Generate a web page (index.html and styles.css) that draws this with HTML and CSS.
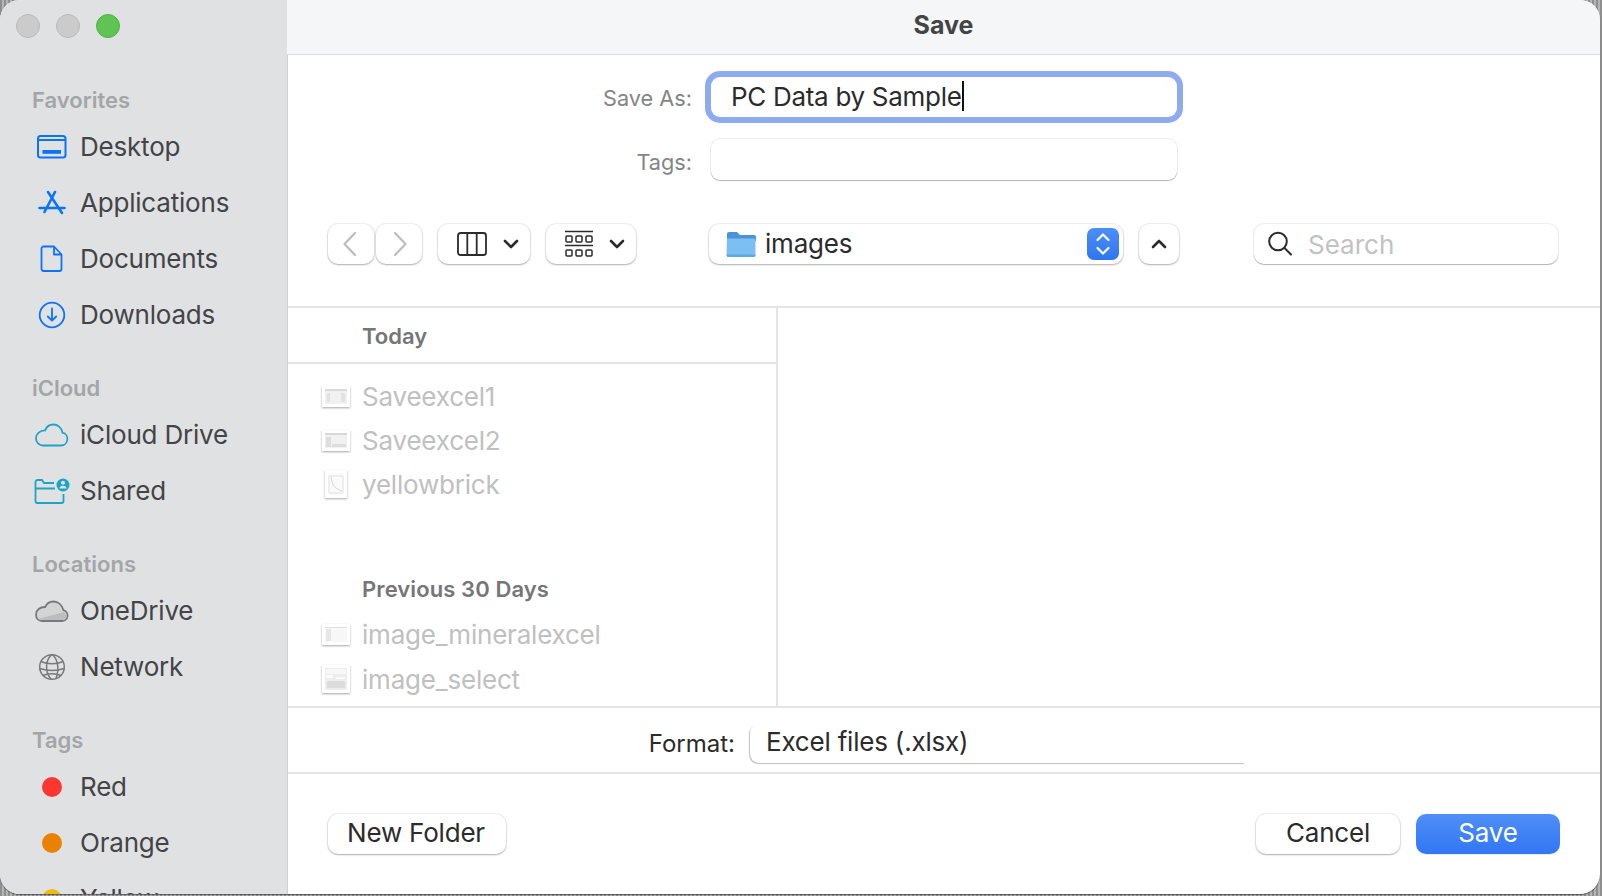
FILE: index.html
```html
<!DOCTYPE html>
<html lang="en">
<head>
<meta charset="utf-8">
<title>Save</title>
<link rel="stylesheet" href="styles.css">
</head>
<body>
<div class="window">
  <aside class="sidebar">
    <div class="lights"><span class="light"></span><span class="light"></span><span class="light green"></span></div>
    <div class="sec-title first">Favorites</div>
    <div class="item"><span class="ico"><svg width="32" height="26" viewBox="0 0 32 26" fill="none" stroke="#0a74f5" stroke-width="2"><rect x="2" y="2" width="27.5" height="21.5" rx="2.5"/><path d="M2 6h27.5"/><rect x="6.5" y="16" width="18.500" height="3.800" fill="#0a74f5" stroke="none"/></svg></span>Desktop</div>
    <div class="item"><span class="ico"><svg width="30" height="28" viewBox="0 0 30 28" fill="none" stroke="#0a74f5" stroke-width="2.600" stroke-linecap="round"><path d="M11 3l14 21M18 3L7.500 23M2.500 19h25"/></svg></span>Applications</div>
    <div class="item"><span class="ico"><svg width="24" height="28" viewBox="0 0 24 28" fill="none" stroke="#0a74f5" stroke-width="1.800" stroke-linejoin="round"><path d="M3.500 1.500H14l7.500 8V24a2 2 0 0 1-2 2h-16a2 2 0 0 1-2-2V3.500a2 2 0 0 1 2-2z"/><path d="M14 1.500V9.500h7.500"/></svg></span>Documents</div>
    <div class="item"><span class="ico"><svg width="28" height="28" viewBox="0 0 28 28" fill="none" stroke="#0a74f5" stroke-width="1.800" stroke-linecap="round" stroke-linejoin="round"><circle cx="14" cy="14" r="12.300"/><path d="M14 7.500v12M9.800 15.500l4.200 4.200 4.200-4.200"/></svg></span>Downloads</div>

    <div class="sec-title">iCloud</div>
    <div class="item"><span class="ico"><svg width="34" height="24" viewBox="0 0 34 24" fill="none" stroke="#1ea5c4" stroke-width="1.800"><path d="M8 22.500h18a6.500 6.500 0 0 0 1.500-12.800C26.500 4.500 22.500 1.500 18.500 1.500c-4 0-7 2.300-8.300 5.800C5 7 1 11 1 15.200c0 4 3 7.300 7 7.300z"/></svg></span>iCloud Drive</div>
    <div class="item"><span class="ico"><svg width="36" height="26" viewBox="0 0 36 26" fill="none" stroke="#1ea5c4" stroke-width="1.800"><path d="M20 5H10L8 2H3.500A2 2 0 0 0 1.500 4v19a2 2 0 0 0 2 2h24a2 2 0 0 0 2-2v-7M1.500 10.500H21"/><circle cx="29" cy="7" r="6.500" fill="#1ea5c4" stroke="none"/><circle cx="29" cy="4.800" r="2" fill="#e0e1e3" stroke="none"/><path d="M25.500 10.500a3.500 2.800 0 0 1 7 0z" fill="#e0e1e3" stroke="none"/></svg></span>Shared</div>

    <div class="sec-title">Locations</div>
    <div class="item"><span class="ico"><svg width="34" height="22" viewBox="0 0 34 22" fill="none"><path d="M7 21h20a5.500 5.500 0 0 0 1.500-10.800C27 5 23 1.500 18.500 1.500c-4 0-7 2.300-8.300 5.500C5 6.800 1 10 1 14.500 1 18.500 3.500 21 7 21z" fill="#d3d4d6" stroke="#77797c" stroke-width="1.800"/><path d="M3 19l26-7 3 5-4 3H7z" fill="#bcbdc0"/></svg></span>OneDrive</div>
    <div class="item"><span class="ico"><svg width="28" height="28" viewBox="0 0 28 28" fill="none" stroke="#77797c" stroke-width="1.500"><circle cx="14" cy="14" r="12.300"/><path d="M14 1.700c-6 4-8 16-1 24.600M14 1.700c5 3 8 13 4 24M3 8.500c6 3 16 3 22 0M1.800 15.500c7 2.500 17 2.500 24.400 0M5 22.500c5-2.500 13-2 18 0"/></svg></span>Network</div>

    <div class="sec-title">Tags</div>
    <div class="item"><span class="ico"><span class="tag red"></span></span>Red</div>
    <div class="item"><span class="ico"><span class="tag orange"></span></span>Orange</div>
    <div class="item"><span class="ico"><span class="tag yellow"></span></span>Yellow</div>
  </aside>

  <main class="main">
    <header class="titlebar">Save</header>

    <div class="form-row save-row">
      <label class="form-label">Save As:</label>
      <div class="field focus"><span>PC Data by Sample</span><i class="caret"></i></div>
    </div>
    <div class="form-row tags-row">
      <label class="form-label">Tags:</label>
      <div class="field tall"></div>
    </div>

    <div class="toolbar">
      <button class="btn nav back"><svg width="16" height="26" viewBox="0 0 16 26" fill="none" stroke="#bdbdbd" stroke-width="2.200" stroke-linecap="round" stroke-linejoin="round"><path d="M13 2L2.500 13 13 24"/></svg></button>
      <button class="btn nav second"><svg width="16" height="26" viewBox="0 0 16 26" fill="none" stroke="#bdbdbd" stroke-width="2.200" stroke-linecap="round" stroke-linejoin="round"><path d="M3 2l10.500 11L3 24"/></svg></button>
      <button class="btn view"><svg width="30" height="24" viewBox="0 0 30 24" fill="none" stroke="#2b2b2b" stroke-width="1.800"><rect x="1" y="1" width="28" height="22" rx="2.500"/><path d="M10.300 1v22M19.700 1v22"/></svg><svg class="chev" width="16" height="10" viewBox="0 0 16 10" fill="none" stroke="#2b2b2b" stroke-width="2.600" stroke-linecap="round" stroke-linejoin="round"><path d="M2 2l6 6 6-6"/></svg></button>
      <button class="btn group"><svg width="28" height="28" viewBox="0 0 28 28" fill="none" stroke="#2b2b2b" stroke-width="1.500"><path d="M0 1.500h28M0 15.500h28"/><rect x="1" y="6" width="6" height="6" rx="1"/><rect x="11" y="6" width="6" height="6" rx="1"/><rect x="21" y="6" width="6" height="6" rx="1"/><rect x="1" y="20" width="6" height="6" rx="1"/><rect x="11" y="20" width="6" height="6" rx="1"/><rect x="21" y="20" width="6" height="6" rx="1"/></svg><svg class="chev" width="16" height="10" viewBox="0 0 16 10" fill="none" stroke="#2b2b2b" stroke-width="2.600" stroke-linecap="round" stroke-linejoin="round"><path d="M2 2l6 6 6-6"/></svg></button>
      <div class="btn popup">
        <svg class="folder" width="30" height="28" viewBox="0 0 30 28"><path d="M1 4a2 2 0 0 1 2-2h8l3 3h14a2 2 0 0 1 2 2v4H1z" fill="#4a93d8"/><path d="M1 8.500h27a1.500 1.500 0 0 1 1.500 1.500V25a2 2 0 0 1-2 2h-25a2 2 0 0 1-2-2z" fill="#7cc0f3"/><path d="M1 24.500h28.500V25a2 2 0 0 1-2 2h-25a2 2 0 0 1-2-2z" fill="#62a6de"/></svg>
        <span class="popup-text">images</span>
        <span class="stepper"><svg width="16" height="24" viewBox="0 0 16 24" fill="none" stroke="#fff" stroke-width="2.200" stroke-linecap="round" stroke-linejoin="round"><path d="M2.500 8L8 2.500 13.500 8M2.500 16L8 21.500 13.500 16"/></svg></span>
      </div>
      <button class="btn up"><svg width="16" height="10" viewBox="0 0 16 10" fill="none" stroke="#2b2b2b" stroke-width="2.600" stroke-linecap="round" stroke-linejoin="round"><path d="M2 8l6-6 6 6"/></svg></button>
      <div class="btn search"><svg width="26" height="26" viewBox="0 0 26 26" fill="none" stroke="#2b2b2b" stroke-width="2" stroke-linecap="round"><circle cx="11" cy="10.500" r="8.800"/><path d="M17.500 17l6.500 6.500"/></svg><span class="placeholder">Search</span></div>
    </div>

    <section class="browser">
      <div class="col-list">
        <div class="list-head">Today</div>
        <div class="file first-file"><span class="thumb wide"><svg width="22" height="15" viewBox="0 0 22 15"><rect width="22" height="15" fill="#f1f1f1"/><rect width="22" height="2" fill="#d9d9d9"/><path d="M2 4h3v9H2zM16 4h4v9h-4z" fill="#e2e2e2"/></svg></span>Saveexcel1</div>
        <div class="file"><span class="thumb wide"><svg width="22" height="15" viewBox="0 0 22 15"><rect width="22" height="15" fill="#f1f1f1"/><rect width="22" height="2" fill="#d9d9d9"/><path d="M1 4h5v10H1zM7 11h14v3H7z" fill="#dedede"/></svg></span>Saveexcel2</div>
        <div class="file"><span class="thumb tall-thumb"><svg width="16" height="22" viewBox="0 0 16 22" fill="none"><rect width="16" height="22" fill="#fafafa"/><path d="M1 3h14v17H1z" stroke="#e2e2e2"/><path d="M3 4c1 8 4 12 11 14" stroke="#cfd8de"/></svg></span>yellowbrick</div>
        <div class="list-head plain">Previous 30 Days</div>
        <div class="file"><span class="thumb wide"><svg width="22" height="15" viewBox="0 0 22 15"><rect width="22" height="15" fill="#f7f7f7"/><rect width="22" height="1" fill="#e0e0e0"/><path d="M1 2h5v12H1z" fill="#e6e6e6"/></svg></span>image_mineralexcel</div>
        <div class="file last-file"><span class="thumb square"><svg width="22" height="22" viewBox="0 0 22 22"><rect width="22" height="22" fill="#ededed"/><path d="M1 1h20v5H1z" fill="#f8f8f8"/><path d="M1 7h7v3H1zM11 9h9v2h-9z" fill="#fbfbfb"/><path d="M2 13h18v7H2z" fill="#dcdcdc"/></svg></span>image_select</div>
      </div>
      <div class="col-empty"></div>
    </section>

    <div class="format-row">
      <label class="format-label">Format:</label>
      <div class="format-field">Excel files (.xlsx)</div>
    </div>

    <footer class="footer">
      <button class="btn action new-folder">New Folder</button>
      <div class="footer-right">
        <button class="btn action cancel">Cancel</button>
        <button class="btn action primary">Save</button>
      </div>
    </footer>
  </main>
</div>
</body>
</html>
```
FILE: styles.css
```css
* { box-sizing: border-box; }
html, body { margin: 0; padding: 0; height: 100%; }
body {
  width: 1602px;
  height: 896px;
  overflow: hidden;
  background: repeating-linear-gradient(90deg, #8f8f8f 0 2px, #b5b5b5 2px 4px);
  font-family: "Inter", "Liberation Sans", sans-serif;
  color: #2b2b2b;
}
.window {
  display: flex;
  width: 1600px;
  height: 894px;
  border-radius: 20px;
  overflow: hidden;
  background: #fff;
  box-shadow: 0 1px 1px rgba(0,0,0,.45);
}
.sidebar {
  flex: 0 0 288px;
  height: 100%;
  overflow: hidden;
  background: #e0e1e3;
  border-right: 1px solid #cfd0d2;
}
.lights { display: flex; gap: 16px; padding: 14px 0 0 16px; height: 86px; }
.light {
  width: 24px; height: 24px; border-radius: 50%;
  background: #cbcbcc; border: 1px solid #b9b9ba;
}
.light.green { background: #5fc454; border-color: #52b148; }
.sec-title {
  height: 28px;
  margin: 31px 0 5px 32px;
  font-size: 22px;
  font-weight: 600;
  line-height: 28px;
  color: #a4a5a8;
}
.sec-title.first { margin-top: 0; }
.item {
  display: flex;
  align-items: center;
  height: 56px;
  padding-bottom: 2px;
  font-size: 26px;
  color: #434446;
  letter-spacing: -.2px;
}
.ico {
  display: flex;
  flex: 0 0 40px;
  align-items: center;
  justify-content: center;
  width: 40px;
  margin: 2px 8px 0 32px;
}
.tag { width: 20px; height: 20px; border-radius: 50%; }
.red { background: #fb3730; }
.orange { background: #ea8200; }
.yellow { background: #f0bb0c; }

.main { flex: 1; min-width: 0; display: flex; flex-direction: column; }
.titlebar {
  height: 55px;
  flex: 0 0 55px;
  display: flex;
  align-items: center;
  justify-content: center;
  background: #f5f6f7;
  border-bottom: 1px solid #dcdcdc;
  font-size: 25px;
  font-weight: 700;
  color: #444;
  margin-left: -1px;
  padding-bottom: 4px;
}
.form-row { display: flex; align-items: center; gap: 19px; }
.save-row { margin-top: 22px; }
.tags-row { margin-top: 22px; }
.form-label {
  flex: 0 0 404px;
  padding-top: 2px;
  text-align: right;
  font-size: 21.7px;
  color: #858585;
}
.tags-row .form-label { padding-top: 4px; }
.field {
  display: flex;
  align-items: center;
  width: 466px;
  height: 40px;
  padding: 0 0 2px 20px;
  background: #fff;
  border-radius: 9px;
  box-shadow: 0 0 0 1px rgba(0,0,0,.06), 0 1px 1px rgba(0,0,0,.25);
  font-size: 26px;
  color: #2b2b2b;
  letter-spacing: -.3px;
}
.field.tall { height: 41px; }
.field.focus { box-shadow: 0 0 0 6px #8fabf0, 0 1px 1px rgba(0,0,0,.3); }
.caret { width: 2px; height: 30px; background: #111; }

.toolbar { display: flex; align-items: stretch; height: 40px; margin: 44px 0 0 40px; }
.btn {
  display: flex;
  align-items: center;
  justify-content: center;
  padding: 0;
  border: 0;
  background: #fff;
  border-radius: 10px;
  box-shadow: 0 0 0 1px rgba(0,0,0,.05), 0 1px 2px rgba(0,0,0,.28);
  font-family: inherit;
  color: #2b2b2b;
}
.nav { width: 46px; }
.back svg { margin-right: 3px; }
.nav.second { margin-left: 2px; }
.nav.second svg { margin-left: 2px; }
.view { width: 92px; margin-left: 16px; gap: 16px; justify-content: flex-start; padding-left: 19px; }
.group { width: 90px; margin-left: 16px; gap: 16px; justify-content: flex-start; padding-left: 19px; }
.popup {
  position: relative;
  width: 414px;
  margin-left: 73px;
  justify-content: flex-start;
  padding-left: 17px;
}
.popup-text { margin-left: 9px; font-size: 26px; letter-spacing: -.2px; position: relative; top: -1px; }
.stepper {
  position: absolute;
  right: 4px;
  top: 4px;
  width: 32px;
  height: 32px;
  display: flex;
  align-items: center;
  justify-content: center;
  border-radius: 7px;
  background: linear-gradient(#4d8ff6, #2f75f0);
}
.up { width: 40px; margin-left: 16px; }
.search {
  width: 304px;
  margin-left: 75px;
  justify-content: flex-start;
  padding-left: 13px;
  gap: 15px;
  box-shadow: 0 0 0 1px rgba(0,0,0,.06), 0 1px 1px rgba(0,0,0,.25);
}
.placeholder { font-size: 26px; color: #c2c2c2; }

.browser {
  display: flex;
  height: 402px;
  margin-top: 42px;
  border-top: 2px solid #e4e4e4;
  border-bottom: 2px solid #e4e4e4;
  overflow: hidden;
}
.col-list { flex: 0 0 490px; border-right: 2px solid #e4e4e4; overflow: hidden; }
.col-empty { flex: 1; }
.list-head {
  height: 56px;
  padding: 13px 0 0 74px;
  font-size: 22px;
  line-height: 30px;
  font-weight: 600;
  color: #767676;
  border-bottom: 2px solid #e2e2e2;
}
.list-head.plain { height: 44px; margin-top: 62px; padding-top: 6px; border-bottom: 0; letter-spacing: .1px; }
.file {
  display: flex;
  align-items: center;
  height: 44px;
  font-size: 26px;
  color: #c0c0c0;
  letter-spacing: -.2px;
}
.first-file { margin-top: 10px; }
.last-file { margin-top: 1px; }
.thumb {
  display: flex;
  align-items: center;
  justify-content: center;
  flex: 0 0 28px;
  margin: 0 12px 0 34px;
}
.thumb svg { box-sizing: content-box; border: 3px solid #fff; box-shadow: 0 1px 2px rgba(0,0,0,.35); }

.format-row { display: flex; align-items: center; height: 66px; gap: 15px; padding-top: 7px; border-bottom: 2px solid #e4e4e4; }
.format-label { flex: 0 0 447px; text-align: right; font-size: 24px; color: #2b2b2b; }
.format-field {
  display: flex;
  align-items: center;
  width: 495px;
  height: 39px;
  padding: 0 0 5px 16px;
  border-radius: 9px 0 0 9px;
  font-size: 26px;
  color: #2b2b2b;
  letter-spacing: -.2px;
  box-shadow: -1px 1px 1px rgba(0,0,0,.25);
}

.footer {
  flex: 1;
  display: flex;
  align-items: center;
  justify-content: space-between;
  padding: 0 40px;
}
.footer-right { display: flex; gap: 16px; }
.action { height: 40px; font-size: 26px; letter-spacing: -.2px; padding-bottom: 3px; }
.new-folder { width: 178px; padding-right: 2px; }
.cancel { width: 144px; }
.primary {
  width: 144px;
  background: linear-gradient(#4e8ff7, #3276f3);
  color: #fff;
  box-shadow: 0 1px 1px rgba(0,0,0,.08);
}
```
